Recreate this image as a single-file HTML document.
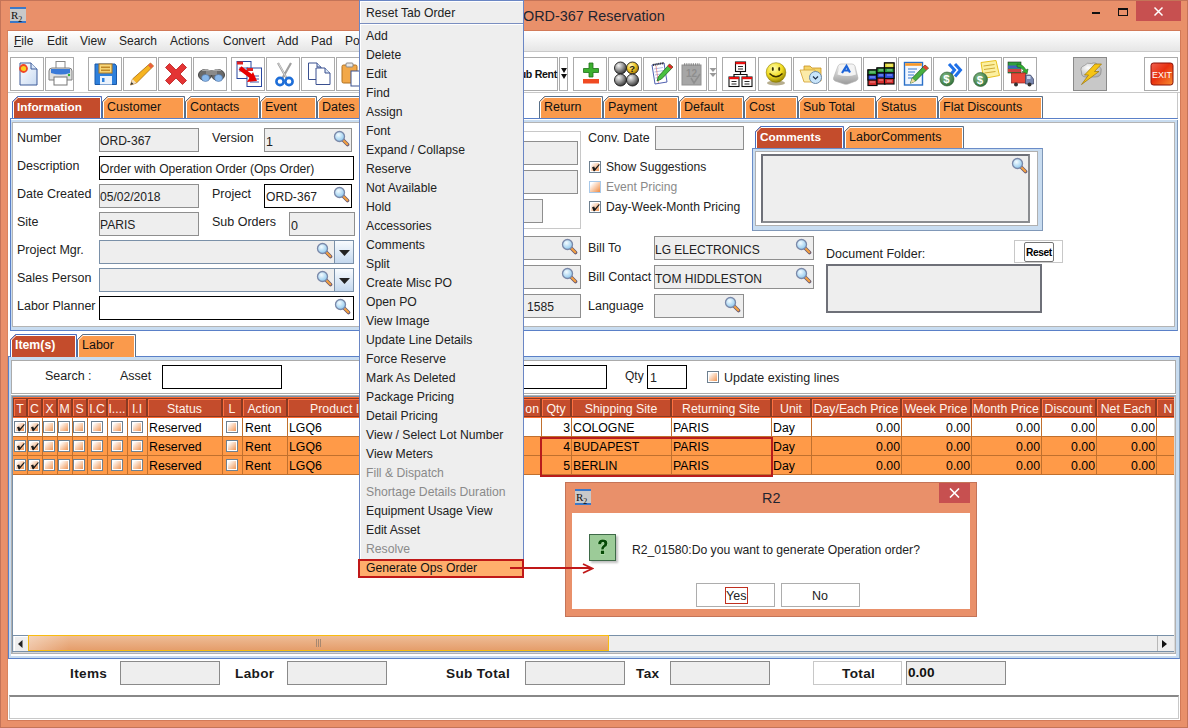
<!DOCTYPE html>
<html><head><meta charset="utf-8">
<style>
*{box-sizing:border-box;margin:0;padding:0}
html,body{width:1188px;height:728px;overflow:hidden}
body{position:relative;background:#E9906A;font-family:"Liberation Sans",sans-serif;font-size:12px;color:#222}
.a{position:absolute}
.t{position:absolute;white-space:nowrap;line-height:1}
.fld{position:absolute;background:#EEEEEE;border:1px solid #8E8E8E}
.fldw{position:absolute;background:#fff;border:1px solid #000}
.tab{position:absolute;top:96px;height:23px;background:#FA9A4E;border:1px solid #7A9CC8;border-bottom:none;font-size:13px;color:#111;padding:4px 0 0 5px;white-space:nowrap;line-height:1}
.tabsel{background:#C44C2A;color:#fff;font-weight:bold}
.lbl{position:absolute;white-space:nowrap;line-height:1;font-size:12.5px;color:#222}
.mi{position:absolute;left:366px;white-space:nowrap;line-height:1;font-size:12.2px;color:#222}
.dis{color:#8A8A8A}
.hd{position:absolute;top:398px;height:19px;background:#C24A2A;border-top:1px solid #FF7A46;border-left:1px solid #FF7A46;border-right:1px solid #8A3018;border-bottom:1px solid #8A3018;color:#fff;font-size:13px;text-align:center;line-height:17px;white-space:nowrap;overflow:hidden}
.cell{position:absolute;height:19px;border-right:1px solid #C87A40;border-bottom:1px solid #C87A40;font-size:13px;line-height:18px;white-space:nowrap;overflow:hidden;color:#000;padding:0 2px}
.cb{position:absolute;width:13px;height:13px;border:1px solid #6E8090;background:linear-gradient(135deg,#fff 15%,#F08A40 100%);box-shadow:inset 0 0 0 1px #fff}
.bold{font-weight:bold}
</style></head><body>

<div class="a" style="left:0;top:0;width:1188px;height:728px;border:1px solid #C47458"></div>
<div class="a" style="left:10px;top:7px;width:16px;height:16px;background:#C9C9C9;border-top:2px solid #3A78C8;border-bottom:2px solid #3A78C8"><div class="t" style="left:1px;top:1px;font-family:'Liberation Serif';font-size:11px;color:#111">R<sub style="font-size:8px">2</sub></div></div>
<div class="t" style="left:523px;top:8px;font-size:15px;color:#1F2430;transform:scaleX(0.96);transform-origin:0 0">ORD-367 Reservation</div>
<div class="a" style="left:1092px;top:12px;width:8px;height:2px;background:#111"></div>
<div class="a" style="left:1118px;top:8px;width:10px;height:8px;border:1px solid #111;border-top-width:2px"></div>
<div class="a" style="left:1136px;top:1px;width:45px;height:20px;background:#C75050"></div>
<svg class="a" style="left:1153px;top:6px" width="11" height="11" viewBox="0 0 11 11"><path d="M1.5 1.5l8 8M9.5 1.5l-8 8" stroke="#fff" stroke-width="1.5"/></svg>
<div class="a" style="left:7px;top:30px;width:1174px;height:691px;background:#fff;border-right:1px solid #D27A58;border-bottom:1px solid #D27A58;border-left:1px solid #D8845E;border-top:1px solid #D27A58"></div>
<div class="a" style="left:8px;top:31px;width:1172px;height:20px;background:linear-gradient(#fff,#E6E6E6)"></div>
<div class="a" style="left:8px;top:51px;width:1172px;height:1px;background:#C9C9C9"></div>
<div class="t" style="left:14px;top:35px"><u>F</u>ile</div>
<div class="t" style="left:47px;top:35px">Edit</div>
<div class="t" style="left:80px;top:35px">View</div>
<div class="t" style="left:119px;top:35px">Search</div>
<div class="t" style="left:170px;top:35px">Actions</div>
<div class="t" style="left:223px;top:35px">Convert</div>
<div class="t" style="left:277px;top:35px">Add</div>
<div class="t" style="left:311px;top:35px">Pad</div>
<div class="t" style="left:345px;top:35px">Po</div>
<svg width="0" height="0" style="position:absolute"><defs>
<radialGradient id="gball" cx="0.35" cy="0.3" r="0.75"><stop offset="0" stop-color="#F4F4F4"/><stop offset="0.45" stop-color="#A0A0A0"/><stop offset="1" stop-color="#303030"/></radialGradient>
<radialGradient id="yball" cx="0.35" cy="0.3" r="0.75"><stop offset="0" stop-color="#FFF8C0"/><stop offset="0.5" stop-color="#F0C828"/><stop offset="1" stop-color="#A07000"/></radialGradient>
<radialGradient id="smile" cx="0.4" cy="0.3" r="0.75"><stop offset="0" stop-color="#FFFDB0"/><stop offset="0.55" stop-color="#F2DC20"/><stop offset="1" stop-color="#8A7A00"/></radialGradient>
<linearGradient id="keyg" x1="0" y1="0" x2="0" y2="1"><stop offset="0" stop-color="#FAFAFA"/><stop offset="1" stop-color="#9A9A9A"/></linearGradient>
<linearGradient id="exitg" x1="0" y1="0" x2="1" y2="1"><stop offset="0" stop-color="#F06050"/><stop offset="0.45" stop-color="#E83010"/><stop offset="1" stop-color="#F89030"/></linearGradient>
<radialGradient id="cloud" cx="0.35" cy="0.35" r="0.8"><stop offset="0" stop-color="#FFFFFF"/><stop offset="1" stop-color="#A8A8A8"/></radialGradient>
<radialGradient id="dollar" cx="0.4" cy="0.35" r="0.7"><stop offset="0" stop-color="#8ABF8A"/><stop offset="1" stop-color="#2E6E36"/></radialGradient>
<linearGradient id="pgrad" x1="0" y1="0" x2="1" y2="1"><stop offset="0" stop-color="#FFFFFF"/><stop offset="1" stop-color="#C8DAF2"/></linearGradient>
</defs></svg>
<div class="a" style="left:10px;top:57px;width:34px;height:34px;border:1px solid #ABABAB;background:#fff"><svg class="a" style="left:3px;top:2px" width="30" height="30" viewBox="0 0 30 30"><path d="M6 3h11l6 6v16H6z" fill="url(#pgrad)" stroke="#3D5A98" stroke-width="1"/><path d="M17 3v6h6" fill="#D8E6F8" stroke="#3D5A98" stroke-width="1"/><circle cx="9.5" cy="8.5" r="3.5" fill="#F8D020" stroke="#F04828" stroke-width="1.8"/></svg></div>
<div class="a" style="left:45px;top:57px;width:29px;height:34px;border:1px solid #ABABAB;background:#fff"><svg class="a" style="left:0px;top:2px" width="30" height="30" viewBox="0 0 30 30"><rect x="10" y="1.5" width="9" height="8" fill="#fff" stroke="#888"/><path d="M3 11q0-3 3-3h17q3 0 3 3v9H3z" fill="#E0E0E0" stroke="#808080"/><path d="M5 9h19v4q-9 3-19 0z" fill="#3A7AD8"/><rect x="8" y="17" width="13" height="8" fill="#fff" stroke="#777"/><circle cx="23" cy="15" r="1.2" fill="#30B030"/></svg></div>
<div class="a" style="left:88px;top:57px;width:34px;height:34px;border:1px solid #ABABAB;background:#fff"><svg class="a" style="left:3px;top:2px" width="30" height="30" viewBox="0 0 30 30"><path d="M3 4h20l1.5 2v18.5H3z" fill="#2E80DC" stroke="#1A58A8"/><rect x="7" y="4" width="13" height="9" fill="#F8D87A" stroke="#B07820"/><rect x="9" y="6.5" width="9" height="1.6" fill="#C08828"/><rect x="9" y="9.5" width="9" height="1.6" fill="#C08828"/><rect x="8" y="16" width="12" height="8.5" fill="#EAF2FC"/><rect x="10" y="18" width="2.5" height="4" fill="#2E80DC"/></svg></div>
<div class="a" style="left:123px;top:57px;width:34px;height:34px;border:1px solid #ABABAB;background:#fff"><svg class="a" style="left:3px;top:2px" width="30" height="30" viewBox="0 0 30 30"><path d="M23.5 3l3 3-17 17-6 2 2-6z" fill="#F6B420" stroke="#A86A10" stroke-width="0.8"/><path d="M23.5 3l3 3-2.5 2.5-3-3z" fill="#E86040"/><path d="M3.5 25l2-6 4 4z" fill="#F2DEC0"/><path d="M3.5 25l1-3 2 2z" fill="#333"/></svg></div>
<div class="a" style="left:158px;top:57px;width:34px;height:34px;border:1px solid #ABABAB;background:#fff"><svg class="a" style="left:3px;top:2px" width="30" height="30" viewBox="0 0 30 30"><path d="M3.5 7.5l4-4 6.5 6.5 6.5-6.5 4 4-6.5 6.5 6.5 6.5-4 4-6.5-6.5-6.5 6.5-4-4 6.5-6.5z" fill="#E43434" stroke="#B81C1C" stroke-width="0.8"/></svg></div>
<div class="a" style="left:193px;top:57px;width:34px;height:34px;border:1px solid #ABABAB;background:#fff"><svg class="a" style="left:3px;top:2px" width="30" height="30" viewBox="0 0 30 30"><ellipse cx="8" cy="15" rx="6.5" ry="5.5" fill="#6A6A6A" stroke="#444"/><ellipse cx="21" cy="15" rx="6.5" ry="5.5" fill="#6A6A6A" stroke="#444"/><rect x="9" y="10" width="11" height="5" fill="#8A8A8A"/><path d="M4 11q5-4 10 0M15 11q5-4 10 0" fill="#A8A8A8"/><ellipse cx="8.5" cy="18" rx="4" ry="3.5" fill="#88B8EC" stroke="#5070A0" stroke-width="0.6"/><ellipse cx="21.5" cy="18" rx="4" ry="3.5" fill="#88B8EC" stroke="#5070A0" stroke-width="0.6"/></svg></div>
<div class="a" style="left:231px;top:57px;width:34px;height:34px;border:1px solid #ABABAB;background:#fff"><svg class="a" style="left:3px;top:2px" width="30" height="30" viewBox="0 0 30 30"><rect x="2" y="1.5" width="14" height="17" fill="#fff" stroke="#2A48A0"/><rect x="2" y="1.5" width="6" height="3" fill="#E02020"/><path d="M4 8h9M4 11h9" stroke="#2A48A0" stroke-width="0.8"/><rect x="12" y="8" width="14.5" height="18.5" fill="#fff" stroke="#2A48A0"/><rect x="12" y="8" width="6" height="3" fill="#E02020"/><path d="M15 16h9M15 19h9M15 22h9" stroke="#2A48A0" stroke-width="0.9"/><path d="M5 8l12 9" stroke="#E80000" stroke-width="4.5"/><path d="M12 22l10-1-4-9z" fill="#E80000"/></svg></div>
<div class="a" style="left:266px;top:57px;width:34px;height:34px;border:1px solid #ABABAB;background:#fff"><svg class="a" style="left:3px;top:2px" width="30" height="30" viewBox="0 0 30 30"><path d="M8 3l8.5 15M21 3l-8.5 15" stroke="#A0A0A0" stroke-width="2.2"/><path d="M8.5 3.5l7.5 13.5" stroke="#E8E8E8" stroke-width="0.8"/><circle cx="10" cy="21.5" r="3.6" fill="none" stroke="#1E6ED8" stroke-width="2.6"/><circle cx="19" cy="21.5" r="3.6" fill="none" stroke="#1E6ED8" stroke-width="2.6"/></svg></div>
<div class="a" style="left:301px;top:57px;width:34px;height:34px;border:1px solid #ABABAB;background:#fff"><svg class="a" style="left:3px;top:2px" width="30" height="30" viewBox="0 0 30 30"><path d="M3.5 3h8.5l4 4v12.5H3.5z" fill="#fff" stroke="#3A5090"/><path d="M12 3v4h4" fill="#D8E4F4" stroke="#3A5090"/><path d="M11 8h9l5 5v11.5H11z" fill="#fff" stroke="#3A5090"/><path d="M20 8v5h5" fill="#D8E4F4" stroke="#3A5090"/></svg></div>
<div class="a" style="left:336px;top:57px;width:34px;height:34px;border:1px solid #ABABAB;background:#fff"><svg class="a" style="left:3px;top:2px" width="30" height="30" viewBox="0 0 30 30"><rect x="2" y="5" width="15" height="18" rx="1.5" fill="#F2A848" stroke="#B07020"/><rect x="6" y="3" width="7" height="4" rx="1" fill="#E8E8E8" stroke="#888"/><rect x="11" y="11" width="14" height="15" fill="#fff" stroke="#3A5090"/></svg></div>
<div class="a" style="left:573px;top:57px;width:34px;height:34px;border:1px solid #ABABAB;background:#fff"><svg class="a" style="left:3px;top:2px" width="30" height="30" viewBox="0 0 30 30"><path d="M12 3h4v5.5h5.5v4H16V17h-4v-4.5H6.5v-4H12z" fill="#3CB030" stroke="#1E7018" stroke-width="0.8"/><rect x="6" y="19" width="16" height="4.5" fill="#F04A22"/></svg></div>
<div class="a" style="left:608px;top:57px;width:34px;height:34px;border:1px solid #ABABAB;background:#fff"><svg class="a" style="left:3px;top:2px" width="30" height="30" viewBox="0 0 30 30"><circle cx="8.5" cy="8" r="6" fill="url(#gball)" stroke="#1A1A1A" stroke-width="0.9"/><circle cx="20.5" cy="8" r="6" fill="url(#yball)" stroke="#1A1A1A" stroke-width="0.9"/><circle cx="8.5" cy="20" r="6" fill="url(#gball)" stroke="#1A1A1A" stroke-width="0.9"/><circle cx="20.5" cy="20" r="6" fill="url(#gball)" stroke="#1A1A1A" stroke-width="0.9"/><text x="17.3" y="12" font-size="9.5" font-weight="bold" fill="#1A1A1A" font-family="Liberation Sans">?</text></svg></div>
<div class="a" style="left:643px;top:57px;width:34px;height:34px;border:1px solid #ABABAB;background:#fff"><svg class="a" style="left:3px;top:2px" width="30" height="30" viewBox="0 0 30 30"><path d="M5 5l12-2 3 19-12 2z" fill="#fff" stroke="#5060B0"/><path d="M6 5l11-2" stroke="#333" stroke-width="2.2" stroke-dasharray="1 0.8"/><path d="M7 9l9-1.5M7.5 12l9-1.5M8 15l9-1.5M8.5 18l9-1.5" stroke="#90A0E0" stroke-width="0.7"/><path d="M9 6l2.5 17" stroke="#E06060" stroke-width="0.6"/><path d="M22.5 4l3.5 3-11.5 12-4.5 2 1.5-4.5z" fill="#48C040" stroke="#1E6A1E" stroke-width="0.8"/><path d="M22.5 4l3.5 3-2 2-3.5-3z" fill="#E02828"/></svg></div>
<div class="a" style="left:678px;top:57px;width:29px;height:34px;border:1px solid #ABABAB;background:#fff"><svg class="a" style="left:0px;top:2px" width="30" height="30" viewBox="0 0 30 30"><rect x="3" y="5" width="19" height="20" fill="#A6A6A6" stroke="#909090"/><path d="M5 4.5h16" stroke="#8A8A8A" stroke-width="2.5" stroke-dasharray="1.2 1"/><text x="7" y="17" font-size="10" font-weight="bold" fill="#8E8E8E" font-family="Liberation Sans">12</text><path d="M12 18l3 5 6-9" fill="none" stroke="#8E8E8E" stroke-width="1.5"/></svg></div>
<div class="a" style="left:722px;top:57px;width:34px;height:34px;border:1px solid #ABABAB;background:#fff"><svg class="a" style="left:3px;top:2px" width="30" height="30" viewBox="0 0 30 30"><path d="M14.5 11v3.5M8 17v-2.5h13V17" fill="none" stroke="#111" stroke-width="1.2"/><rect x="9.5" y="2" width="10" height="9.5" fill="#fff" stroke="#111" stroke-width="1.1"/><rect x="9.5" y="2" width="10" height="2.2" fill="#E81010"/><rect x="3" y="17" width="10" height="9.5" fill="#fff" stroke="#111" stroke-width="1.1"/><rect x="3" y="17" width="10" height="2.2" fill="#E81010"/><rect x="16" y="17" width="10" height="9.5" fill="#fff" stroke="#111" stroke-width="1.1"/><rect x="16" y="17" width="10" height="2.2" fill="#E81010"/><path d="M12 6.5h5M12 9h5M5.5 21.5h5M5.5 24h5M18.5 21.5h5M18.5 24h5" stroke="#111" stroke-width="0.9"/></svg></div>
<div class="a" style="left:758px;top:57px;width:34px;height:34px;border:1px solid #ABABAB;background:#fff"><svg class="a" style="left:3px;top:2px" width="30" height="30" viewBox="0 0 30 30"><ellipse cx="14" cy="23" rx="9" ry="2.5" fill="#7A6A30" opacity="0.55"/><circle cx="14" cy="12.5" r="9.8" fill="url(#smile)" stroke="#8A7A00" stroke-width="0.6"/><ellipse cx="10.8" cy="9" rx="1" ry="2" fill="#3A3000"/><ellipse cx="17.2" cy="9" rx="1" ry="2" fill="#3A3000"/><path d="M7.5 13.5q6.5 6.5 13 0" fill="none" stroke="#3A3000" stroke-width="1.5"/></svg></div>
<div class="a" style="left:793px;top:57px;width:34px;height:34px;border:1px solid #ABABAB;background:#fff"><svg class="a" style="left:3px;top:2px" width="30" height="30" viewBox="0 0 30 30"><path d="M7 6h6l2 2h9v13H7z" fill="#F4D468" stroke="#C89020" stroke-width="0.8"/><path d="M3 10h15l3 12H7z" fill="#FCEBA8" stroke="#D0A030" stroke-width="0.8"/><circle cx="18.5" cy="17.5" r="6" fill="#C8E4FA" stroke="#6A88A8" stroke-width="1"/><path d="M16 16.5l2.5 2.5 2.5-2.5" fill="none" stroke="#1A2A44" stroke-width="1.1"/></svg></div>
<div class="a" style="left:828px;top:57px;width:34px;height:34px;border:1px solid #ABABAB;background:#fff"><svg class="a" style="left:3px;top:2px" width="30" height="30" viewBox="0 0 30 30"><path d="M6 6q1-2 3-2h11q2 0 3 2l3 12q0 2-2 3l-8 3q-2 0.6-4 0l-9-3q-2-1-1.5-3z" fill="url(#keyg)" stroke="#B0B0B0" stroke-width="0.6"/><path d="M7.5 6.5q0.8-1.5 2.5-1.5h9.5q1.8 0 2.5 1.5l2 8q-9 3-18.5 0z" fill="#F4F4F4"/><path d="M10 13l4.5-7 3.5 6.5M11.5 10.5h5" fill="none" stroke="#1E64D8" stroke-width="2.2"/></svg></div>
<div class="a" style="left:863px;top:57px;width:34px;height:34px;border:1px solid #ABABAB;background:#fff"><svg class="a" style="left:3px;top:2px" width="30" height="30" viewBox="0 0 30 30"><g stroke="#080808" stroke-width="1.2"><rect x="1" y="10" width="9" height="15.5" fill="#D83030"/><rect x="1" y="10" width="9" height="5" fill="#30A040"/><rect x="1" y="15" width="9" height="5" fill="#3050E0"/><rect x="10" y="8" width="8" height="16" fill="#D83030"/><rect x="10" y="8" width="8" height="5" fill="#30A040"/><rect x="10" y="13" width="8" height="5" fill="#3050E0"/><rect x="17.5" y="3" width="9.5" height="21" fill="#D83030"/><rect x="17.5" y="3" width="9.5" height="5" fill="#E8E040"/><rect x="17.5" y="8" width="9.5" height="5" fill="#30A040"/><rect x="17.5" y="13" width="9.5" height="5.5" fill="#3050E0"/></g><path d="M3 12h5M3 17h5M3 22h5M12 10h4M12 15h4M12 20h4M20 5h5M20 10h5M20 15h5M20 21h5" stroke="#fff" stroke-width="0.8" opacity="0.6"/></svg></div>
<div class="a" style="left:898px;top:57px;width:34px;height:34px;border:1px solid #ABABAB;background:#fff"><svg class="a" style="left:3px;top:2px" width="30" height="30" viewBox="0 0 30 30"><rect x="2.5" y="2.5" width="18" height="22.5" fill="#F2F7FE" stroke="#2A70C8" stroke-width="1.4"/><rect x="3.2" y="3.2" width="16.6" height="2.6" fill="#F89828"/><path d="M6 9h9M6 12h7M6 15h6M6 18h5" stroke="#3A7AD0" stroke-width="1"/><path d="M23 5l3.5 3-13 13-5 2.2 1.7-5z" fill="#48B040" stroke="#1E601E" stroke-width="0.8"/><path d="M23 5l3.5 3-2.3 2.3-3.5-3z" fill="#E04030"/><path d="M8.5 23.2l1.7-5 3.3 3z" fill="#F0D8A0"/></svg></div>
<div class="a" style="left:933px;top:57px;width:34px;height:34px;border:1px solid #ABABAB;background:#fff"><svg class="a" style="left:3px;top:2px" width="30" height="30" viewBox="0 0 30 30"><path d="M12 4l5.5 6-5.5 6.5M18 4l5.5 6-5.5 6.5" fill="none" stroke="#1E70E8" stroke-width="3"/><circle cx="10" cy="19" r="7" fill="url(#dollar)" stroke="#2A5A30" stroke-width="0.6"/><text x="6.3" y="23.3" font-size="11.5" font-weight="bold" fill="#fff" font-family="Liberation Sans">$</text></svg></div>
<div class="a" style="left:968px;top:57px;width:34px;height:34px;border:1px solid #ABABAB;background:#fff"><svg class="a" style="left:3px;top:2px" width="30" height="30" viewBox="0 0 30 30"><path d="M9 2.5l15-2 3.5 15-16 3z" fill="#FCF0A0" stroke="#E8C020" stroke-width="1"/><path d="M11.5 6l11-1.5M12 9.5l11-1.5M12.5 13l11-1.5" stroke="#C8A028" stroke-width="0.9"/><circle cx="8.5" cy="19.5" r="7" fill="url(#dollar)" stroke="#2A5A30" stroke-width="0.6"/><text x="4.8" y="23.8" font-size="11.5" font-weight="bold" fill="#fff" font-family="Liberation Sans">$</text></svg></div>
<div class="a" style="left:1003px;top:57px;width:34px;height:34px;border:1px solid #ABABAB;background:#fff"><svg class="a" style="left:3px;top:2px" width="30" height="30" viewBox="0 0 30 30"><rect x="1" y="2" width="13" height="11" fill="#30A040" stroke="#203020" stroke-width="0.6"/><rect x="1" y="5.5" width="13" height="3" fill="#4060C0"/><rect x="1" y="9" width="13" height="3" fill="#D04040"/><path d="M10 4q6 0 9 6l2-1-1 5-5-2 2-1q-2-4-7-4z" fill="#30B030" stroke="#1A601A" stroke-width="0.6"/><rect x="4.5" y="13" width="14" height="10" fill="#E84838" stroke="#902020" stroke-width="0.7"/><path d="M18.5 15h5l3 4v5h-8z" fill="#7A88B0" stroke="#3A4060" stroke-width="0.7"/><rect x="20" y="16" width="3.5" height="3" fill="#C8D8F0"/><circle cx="9" cy="24.5" r="2" fill="#333"/><circle cx="22.5" cy="24.5" r="2" fill="#333"/></svg></div>
<div class="a" style="left:1073px;top:57px;width:34px;height:34px;border:1px solid #8A8A8A;background:#C8C8C8"><svg class="a" style="left:3px;top:2px" width="30" height="30" viewBox="0 0 30 30"><path d="M4.5 12q-2-5 3-6.5q2.5-3.5 7-2q4.5-2 7 2.5q4 2 2.5 6q0 5-6 5H9q-5 0-4.5-5z" fill="url(#cloud)" stroke="#8A8A8A" stroke-width="0.7"/><path d="M18 4H24.5L17.5 11.5H22L4.5 24.5L11.5 15H7.5z" fill="#F6C414" stroke="#9A7408" stroke-width="0.7"/></svg></div>
<div class="a" style="left:1144px;top:57px;width:34px;height:34px;border:1px solid #ABABAB;background:#fff"><svg class="a" style="left:3px;top:2px" width="30" height="30" viewBox="0 0 30 30"><rect x="3" y="3" width="22" height="22" rx="2.5" fill="url(#exitg)" stroke="#8A1008" stroke-width="1"/><text x="4" y="18.2" font-size="9.6" fill="#fff" font-family="Liberation Sans" textLength="20" lengthAdjust="spacingAndGlyphs">EXIT</text></svg></div>
<div class="a" style="left:524px;top:57px;width:34px;height:34px;border:1px solid #ABABAB;border-left:none;background:#fff"></div>
<div class="t bold" style="right:631px;top:69px;font-size:10.6px;letter-spacing:-0.3px;color:#111">Sub Rent</div>
<div class="a" style="left:559px;top:57px;width:9px;height:34px;border:1px solid #ABABAB;background:#fff"></div>
<svg class="a" style="left:561px;top:68px" width="6" height="11" viewBox="0 0 6 11"><path d="M0 0h6l-3 5zM0 6h6l-3 5z" fill="#111"/></svg>
<div class="a" style="left:708px;top:57px;width:9px;height:34px;border:1px solid #ABABAB;background:#fff"></div>
<svg class="a" style="left:709px;top:67px" width="8" height="12" viewBox="0 0 8 12"><path d="M0.5 1h7l-3.5 4zM0.5 6h7l-3.5 4z" fill="#999"/></svg>
<div class="a" style="left:8px;top:92px;width:1172px;height:1px;background:#C8C8C8"></div>
<div class="a" style="left:10px;top:92px;width:1168px;height:27px;border-right:1px solid #C8C8C8"></div>
<svg class="a" style="left:12px;top:96px" width="90" height="23" viewBox="0 0 90 23"><path d="M0.5 23 V5.5 L5.5 0.5 H89.5 V23" fill="#C44C2C" stroke="#4A70C0" stroke-width="1"/><path d="M1.5 23 V6 L6 1.5 H88.5 V23" fill="none" stroke="#fff" stroke-width="1"/><text x="5" y="15" font-family="Liberation Sans" font-size="11.8" font-weight="bold" fill="#fff">Information</text></svg>
<svg class="a" style="left:102px;top:96px" width="83" height="23" viewBox="0 0 83 23"><path d="M0.5 23 V5.5 L5.5 0.5 H82.5 V23" fill="#FA9A4C" stroke="#58708A" stroke-width="1"/><path d="M1.5 23 V6 L6 1.5 H81.5 V23" fill="none" stroke="#fff" stroke-width="1"/><text x="5" y="15" font-family="Liberation Sans" font-size="12.5" font-weight="normal" fill="#111">Customer</text></svg>
<svg class="a" style="left:185px;top:96px" width="75" height="23" viewBox="0 0 75 23"><path d="M0.5 23 V5.5 L5.5 0.5 H74.5 V23" fill="#FA9A4C" stroke="#58708A" stroke-width="1"/><path d="M1.5 23 V6 L6 1.5 H73.5 V23" fill="none" stroke="#fff" stroke-width="1"/><text x="5" y="15" font-family="Liberation Sans" font-size="12.5" font-weight="normal" fill="#111">Contacts</text></svg>
<svg class="a" style="left:260px;top:96px" width="57" height="23" viewBox="0 0 57 23"><path d="M0.5 23 V5.5 L5.5 0.5 H56.5 V23" fill="#FA9A4C" stroke="#58708A" stroke-width="1"/><path d="M1.5 23 V6 L6 1.5 H55.5 V23" fill="none" stroke="#fff" stroke-width="1"/><text x="5" y="15" font-family="Liberation Sans" font-size="12.5" font-weight="normal" fill="#111">Event</text></svg>
<svg class="a" style="left:317px;top:96px" width="84" height="23" viewBox="0 0 84 23"><path d="M0.5 23 V5.5 L5.5 0.5 H83.5 V23" fill="#FA9A4C" stroke="#58708A" stroke-width="1"/><path d="M1.5 23 V6 L6 1.5 H82.5 V23" fill="none" stroke="#fff" stroke-width="1"/><text x="5" y="15" font-family="Liberation Sans" font-size="12.5" font-weight="normal" fill="#111">Dates</text></svg>
<svg class="a" style="left:539px;top:96px" width="64" height="23" viewBox="0 0 64 23"><path d="M0.5 23 V5.5 L5.5 0.5 H63.5 V23" fill="#FA9A4C" stroke="#58708A" stroke-width="1"/><path d="M1.5 23 V6 L6 1.5 H62.5 V23" fill="none" stroke="#fff" stroke-width="1"/><text x="5" y="15" font-family="Liberation Sans" font-size="12.5" font-weight="normal" fill="#111">Return</text></svg>
<svg class="a" style="left:603px;top:96px" width="76" height="23" viewBox="0 0 76 23"><path d="M0.5 23 V5.5 L5.5 0.5 H75.5 V23" fill="#FA9A4C" stroke="#58708A" stroke-width="1"/><path d="M1.5 23 V6 L6 1.5 H74.5 V23" fill="none" stroke="#fff" stroke-width="1"/><text x="5" y="15" font-family="Liberation Sans" font-size="12.5" font-weight="normal" fill="#111">Payment</text></svg>
<svg class="a" style="left:679px;top:96px" width="65" height="23" viewBox="0 0 65 23"><path d="M0.5 23 V5.5 L5.5 0.5 H64.5 V23" fill="#FA9A4C" stroke="#58708A" stroke-width="1"/><path d="M1.5 23 V6 L6 1.5 H63.5 V23" fill="none" stroke="#fff" stroke-width="1"/><text x="5" y="15" font-family="Liberation Sans" font-size="12.5" font-weight="normal" fill="#111">Default</text></svg>
<svg class="a" style="left:744px;top:96px" width="54" height="23" viewBox="0 0 54 23"><path d="M0.5 23 V5.5 L5.5 0.5 H53.5 V23" fill="#FA9A4C" stroke="#58708A" stroke-width="1"/><path d="M1.5 23 V6 L6 1.5 H52.5 V23" fill="none" stroke="#fff" stroke-width="1"/><text x="5" y="15" font-family="Liberation Sans" font-size="12.5" font-weight="normal" fill="#111">Cost</text></svg>
<svg class="a" style="left:798px;top:96px" width="78" height="23" viewBox="0 0 78 23"><path d="M0.5 23 V5.5 L5.5 0.5 H77.5 V23" fill="#FA9A4C" stroke="#58708A" stroke-width="1"/><path d="M1.5 23 V6 L6 1.5 H76.5 V23" fill="none" stroke="#fff" stroke-width="1"/><text x="5" y="15" font-family="Liberation Sans" font-size="12.5" font-weight="normal" fill="#111">Sub Total</text></svg>
<svg class="a" style="left:876px;top:96px" width="62" height="23" viewBox="0 0 62 23"><path d="M0.5 23 V5.5 L5.5 0.5 H61.5 V23" fill="#FA9A4C" stroke="#58708A" stroke-width="1"/><path d="M1.5 23 V6 L6 1.5 H60.5 V23" fill="none" stroke="#fff" stroke-width="1"/><text x="5" y="15" font-family="Liberation Sans" font-size="12.5" font-weight="normal" fill="#111">Status</text></svg>
<svg class="a" style="left:938px;top:96px" width="105" height="23" viewBox="0 0 105 23"><path d="M0.5 23 V5.5 L5.5 0.5 H104.5 V23" fill="#FA9A4C" stroke="#58708A" stroke-width="1"/><path d="M1.5 23 V6 L6 1.5 H103.5 V23" fill="none" stroke="#fff" stroke-width="1"/><text x="5" y="15" font-family="Liberation Sans" font-size="12.5" font-weight="normal" fill="#111">Flat Discounts</text></svg>
<div class="a" style="left:10px;top:118px;width:1168px;height:213px;background:#C8DCF0;border:1px solid #5A80C8;border-right-color:#8098B8"></div>
<div class="a" style="left:11px;top:119px;width:1167px;height:1px;background:#fff"></div>
<div class="a" style="left:12px;top:122px;width:1163px;height:205px;border:1px solid #B4B4B4;background:#fff"></div>
<div class="lbl" style="left:17px;top:132px">Number</div>
<div class="lbl" style="left:17px;top:160px">Description</div>
<div class="lbl" style="left:17px;top:188px">Date Created</div>
<div class="lbl" style="left:17px;top:216px">Site</div>
<div class="lbl" style="left:17px;top:244px">Project Mgr.</div>
<div class="lbl" style="left:17px;top:272px">Sales Person</div>
<div class="lbl" style="left:17px;top:300px">Labor Planner</div>
<div class="fld" style="left:99px;top:128px;width:100px;height:24px"><div class="t" style="left:0;top:6px;font-size:12.1px">ORD-367</div></div>
<div class="lbl" style="left:212px;top:132px">Version</div>
<div class="fld" style="left:264px;top:128px;width:88px;height:24px"><div class="t" style="left:1px;top:7px;font-size:12.5px">1</div></div>
<div class="fldw" style="left:99px;top:156px;width:255px;height:24px"><div class="t" style="left:0;top:6px;font-size:12.1px">Order with Operation Order (Ops Order)</div></div>
<div class="fld" style="left:99px;top:184px;width:100px;height:24px"><div class="t" style="left:0;top:6px;font-size:12.1px">05/02/2018</div></div>
<div class="lbl" style="left:212px;top:188px">Project</div>
<div class="fldw" style="left:264px;top:184px;width:88px;height:24px"><div class="t" style="left:1px;top:6px;font-size:12.1px">ORD-367</div></div>
<div class="fld" style="left:99px;top:212px;width:100px;height:24px"><div class="t" style="left:0;top:6px;font-size:12.1px">PARIS</div></div>
<div class="lbl" style="left:212px;top:216px">Sub Orders</div>
<div class="fld" style="left:289px;top:212px;width:66px;height:24px"><div class="t" style="left:1px;top:7px;font-size:12.5px">0</div></div>
<div class="a" style="left:99px;top:240px;width:255px;height:24px;background:#EEEEEE;border:1px solid #7A90A8"></div><div class="a" style="left:334px;top:240px;width:20px;height:24px;background:linear-gradient(#F8FBFE,#C4D8EE);border:1px solid #7A90A8"></div><svg class="a" style="left:339px;top:250px" width="11" height="6" viewBox="0 0 11 6"><path d="M0 0h11L5.5 6z" fill="#222"/></svg>
<svg class="a" style="left:316px;top:242px" width="17" height="17" viewBox="0 0 17 17"><defs><radialGradient id="lg" cx="0.4" cy="0.35" r="0.7"><stop offset="0" stop-color="#F4FCFF"/><stop offset="1" stop-color="#88C4EC"/></radialGradient></defs><path d="M9.5 9.5l5 5" stroke="#6A5A70" stroke-width="3.6" stroke-linecap="round"/><path d="M9.8 9.8l4.5 4.5" stroke="#F4A040" stroke-width="2" stroke-linecap="round"/><circle cx="6.5" cy="6.5" r="5" fill="url(#lg)" stroke="#7A88A8" stroke-width="1.3"/></svg>
<div class="a" style="left:99px;top:268px;width:255px;height:24px;background:#EEEEEE;border:1px solid #7A90A8"></div><div class="a" style="left:334px;top:268px;width:20px;height:24px;background:linear-gradient(#F8FBFE,#C4D8EE);border:1px solid #7A90A8"></div><svg class="a" style="left:339px;top:278px" width="11" height="6" viewBox="0 0 11 6"><path d="M0 0h11L5.5 6z" fill="#222"/></svg>
<svg class="a" style="left:316px;top:270px" width="17" height="17" viewBox="0 0 17 17"><defs><radialGradient id="lg" cx="0.4" cy="0.35" r="0.7"><stop offset="0" stop-color="#F4FCFF"/><stop offset="1" stop-color="#88C4EC"/></radialGradient></defs><path d="M9.5 9.5l5 5" stroke="#6A5A70" stroke-width="3.6" stroke-linecap="round"/><path d="M9.8 9.8l4.5 4.5" stroke="#F4A040" stroke-width="2" stroke-linecap="round"/><circle cx="6.5" cy="6.5" r="5" fill="url(#lg)" stroke="#7A88A8" stroke-width="1.3"/></svg>
<div class="fldw" style="left:99px;top:296px;width:255px;height:24px"></div>
<svg class="a" style="left:334px;top:298px" width="17" height="17" viewBox="0 0 17 17"><defs><radialGradient id="lg" cx="0.4" cy="0.35" r="0.7"><stop offset="0" stop-color="#F4FCFF"/><stop offset="1" stop-color="#88C4EC"/></radialGradient></defs><path d="M9.5 9.5l5 5" stroke="#6A5A70" stroke-width="3.6" stroke-linecap="round"/><path d="M9.8 9.8l4.5 4.5" stroke="#F4A040" stroke-width="2" stroke-linecap="round"/><circle cx="6.5" cy="6.5" r="5" fill="url(#lg)" stroke="#7A88A8" stroke-width="1.3"/></svg>
<svg class="a" style="left:333px;top:130px" width="17" height="17" viewBox="0 0 17 17"><defs><radialGradient id="lg" cx="0.4" cy="0.35" r="0.7"><stop offset="0" stop-color="#F4FCFF"/><stop offset="1" stop-color="#88C4EC"/></radialGradient></defs><path d="M9.5 9.5l5 5" stroke="#6A5A70" stroke-width="3.6" stroke-linecap="round"/><path d="M9.8 9.8l4.5 4.5" stroke="#F4A040" stroke-width="2" stroke-linecap="round"/><circle cx="6.5" cy="6.5" r="5" fill="url(#lg)" stroke="#7A88A8" stroke-width="1.3"/></svg>
<svg class="a" style="left:333px;top:186px" width="17" height="17" viewBox="0 0 17 17"><defs><radialGradient id="lg" cx="0.4" cy="0.35" r="0.7"><stop offset="0" stop-color="#F4FCFF"/><stop offset="1" stop-color="#88C4EC"/></radialGradient></defs><path d="M9.5 9.5l5 5" stroke="#6A5A70" stroke-width="3.6" stroke-linecap="round"/><path d="M9.8 9.8l4.5 4.5" stroke="#F4A040" stroke-width="2" stroke-linecap="round"/><circle cx="6.5" cy="6.5" r="5" fill="url(#lg)" stroke="#7A88A8" stroke-width="1.3"/></svg>
<div class="a" style="left:500px;top:131px;width:81px;height:98px;border:1px solid #C8C8C8"></div>
<div class="fld" style="left:500px;top:141px;width:78px;height:24px"></div>
<div class="fld" style="left:500px;top:170px;width:78px;height:24px"></div>
<div class="fld" style="left:500px;top:199px;width:43px;height:24px"></div>
<div class="fld" style="left:500px;top:236px;width:81px;height:24px"></div>
<div class="fld" style="left:500px;top:265px;width:81px;height:24px"></div>
<div class="fld" style="left:500px;top:294px;width:81px;height:24px"><div class="t" style="left:26px;top:6px;font-size:12.1px">1585</div></div>
<div class="lbl" style="left:588px;top:132px">Conv. Date</div>
<div class="fld" style="left:655px;top:126px;width:89px;height:24px"></div>
<div class="cb" style="left:589px;top:161px;width:12px;height:12px"><svg class="a" style="left:0px;top:0px" width="11" height="11" viewBox="0 0 11 11"><path d="M2 5.2L4.2 4.6L5 6.6L9 2L9.8 2.8L4.6 9.2L3.6 9.2z" fill="#1A1A1A"/></svg></div>
<div class="lbl" style="left:606px;top:161px;font-size:12.1px">Show Suggestions</div>
<div class="cb" style="left:589px;top:181px;width:12px;height:12px;border-color:#A8C8E8;box-shadow:none"></div>
<div class="lbl dis" style="left:606px;top:181px;font-size:12.1px">Event Pricing</div>
<div class="cb" style="left:589px;top:201px;width:12px;height:12px"><svg class="a" style="left:0px;top:0px" width="11" height="11" viewBox="0 0 11 11"><path d="M2 5.2L4.2 4.6L5 6.6L9 2L9.8 2.8L4.6 9.2L3.6 9.2z" fill="#1A1A1A"/></svg></div>
<div class="lbl" style="left:606px;top:201px;font-size:12.1px">Day-Week-Month Pricing</div>
<div class="lbl" style="left:588px;top:242px">Bill To</div>
<div class="fld" style="left:654px;top:236px;width:160px;height:24px"><div class="t" style="left:0px;top:7px;font-size:12.0px">LG ELECTRONICS</div></div>
<div class="lbl" style="left:588px;top:271px">Bill Contact</div>
<div class="fld" style="left:654px;top:265px;width:160px;height:24px"><div class="t" style="left:0px;top:7px;font-size:12.0px">TOM HIDDLESTON</div></div>
<div class="lbl" style="left:588px;top:300px">Language</div>
<div class="fld" style="left:654px;top:294px;width:90px;height:24px"></div>
<svg class="a" style="left:561px;top:238px" width="17" height="17" viewBox="0 0 17 17"><defs><radialGradient id="lg" cx="0.4" cy="0.35" r="0.7"><stop offset="0" stop-color="#F4FCFF"/><stop offset="1" stop-color="#88C4EC"/></radialGradient></defs><path d="M9.5 9.5l5 5" stroke="#6A5A70" stroke-width="3.6" stroke-linecap="round"/><path d="M9.8 9.8l4.5 4.5" stroke="#F4A040" stroke-width="2" stroke-linecap="round"/><circle cx="6.5" cy="6.5" r="5" fill="url(#lg)" stroke="#7A88A8" stroke-width="1.3"/></svg>
<svg class="a" style="left:561px;top:267px" width="17" height="17" viewBox="0 0 17 17"><defs><radialGradient id="lg" cx="0.4" cy="0.35" r="0.7"><stop offset="0" stop-color="#F4FCFF"/><stop offset="1" stop-color="#88C4EC"/></radialGradient></defs><path d="M9.5 9.5l5 5" stroke="#6A5A70" stroke-width="3.6" stroke-linecap="round"/><path d="M9.8 9.8l4.5 4.5" stroke="#F4A040" stroke-width="2" stroke-linecap="round"/><circle cx="6.5" cy="6.5" r="5" fill="url(#lg)" stroke="#7A88A8" stroke-width="1.3"/></svg>
<svg class="a" style="left:795px;top:238px" width="17" height="17" viewBox="0 0 17 17"><defs><radialGradient id="lg" cx="0.4" cy="0.35" r="0.7"><stop offset="0" stop-color="#F4FCFF"/><stop offset="1" stop-color="#88C4EC"/></radialGradient></defs><path d="M9.5 9.5l5 5" stroke="#6A5A70" stroke-width="3.6" stroke-linecap="round"/><path d="M9.8 9.8l4.5 4.5" stroke="#F4A040" stroke-width="2" stroke-linecap="round"/><circle cx="6.5" cy="6.5" r="5" fill="url(#lg)" stroke="#7A88A8" stroke-width="1.3"/></svg>
<svg class="a" style="left:795px;top:267px" width="17" height="17" viewBox="0 0 17 17"><defs><radialGradient id="lg" cx="0.4" cy="0.35" r="0.7"><stop offset="0" stop-color="#F4FCFF"/><stop offset="1" stop-color="#88C4EC"/></radialGradient></defs><path d="M9.5 9.5l5 5" stroke="#6A5A70" stroke-width="3.6" stroke-linecap="round"/><path d="M9.8 9.8l4.5 4.5" stroke="#F4A040" stroke-width="2" stroke-linecap="round"/><circle cx="6.5" cy="6.5" r="5" fill="url(#lg)" stroke="#7A88A8" stroke-width="1.3"/></svg>
<svg class="a" style="left:724px;top:296px" width="17" height="17" viewBox="0 0 17 17"><defs><radialGradient id="lg" cx="0.4" cy="0.35" r="0.7"><stop offset="0" stop-color="#F4FCFF"/><stop offset="1" stop-color="#88C4EC"/></radialGradient></defs><path d="M9.5 9.5l5 5" stroke="#6A5A70" stroke-width="3.6" stroke-linecap="round"/><path d="M9.8 9.8l4.5 4.5" stroke="#F4A040" stroke-width="2" stroke-linecap="round"/><circle cx="6.5" cy="6.5" r="5" fill="url(#lg)" stroke="#7A88A8" stroke-width="1.3"/></svg>
<svg class="a" style="left:755px;top:126px" width="89" height="22" viewBox="0 0 89 22"><path d="M0.5 22 V5.5 L5.5 0.5 H88.5 V22" fill="#C44C2C" stroke="#4A70C0" stroke-width="1"/><path d="M1.5 22 V6 L6 1.5 H87.5 V22" fill="none" stroke="#fff" stroke-width="1"/><text x="5" y="15" font-family="Liberation Sans" font-size="11.8" font-weight="bold" fill="#fff">Comments</text></svg>
<svg class="a" style="left:844px;top:126px" width="120" height="22" viewBox="0 0 120 22"><path d="M0.5 22 V5.5 L5.5 0.5 H119.5 V22" fill="#FA9A4C" stroke="#58708A" stroke-width="1"/><path d="M1.5 22 V6 L6 1.5 H118.5 V22" fill="none" stroke="#fff" stroke-width="1"/><text x="5" y="15" font-family="Liberation Sans" font-size="12.5" font-weight="normal" fill="#111">LaborComments</text></svg>
<div class="a" style="left:752px;top:148px;width:291px;height:83px;background:#C8DCF0;border:1px solid #6A8CC8;border-right-color:#8098B8;border-bottom-color:#8098B8"></div>
<div class="a" style="left:755px;top:151px;width:283px;height:75px;border:1px solid #B0B0B0;background:#fff"></div>
<div class="a" style="left:761px;top:154px;width:269px;height:69px;background:#EEEEEE;border:2px solid #6E7078;border-right-color:#8A8C90;border-bottom-color:#8A8C90"></div>
<svg class="a" style="left:1011px;top:157px" width="17" height="17" viewBox="0 0 17 17"><defs><radialGradient id="lg" cx="0.4" cy="0.35" r="0.7"><stop offset="0" stop-color="#F4FCFF"/><stop offset="1" stop-color="#88C4EC"/></radialGradient></defs><path d="M9.5 9.5l5 5" stroke="#6A5A70" stroke-width="3.6" stroke-linecap="round"/><path d="M9.8 9.8l4.5 4.5" stroke="#F4A040" stroke-width="2" stroke-linecap="round"/><circle cx="6.5" cy="6.5" r="5" fill="url(#lg)" stroke="#7A88A8" stroke-width="1.3"/></svg>
<div class="lbl" style="left:826px;top:248px;font-size:12.5px">Document Folder:</div>
<div class="a" style="left:826px;top:264px;width:216px;height:49px;background:#EEEEEE;border:2px solid #6E7078"></div>
<div class="a" style="left:1014px;top:240px;width:49px;height:23px;border:1px solid #C8C8C8"></div>
<div class="a" style="left:1024px;top:242px;width:30px;height:20px;border:1px solid #777;border-radius:2px;background:#fff"><div class="t bold" style="left:1px;top:5px;font-size:10.2px;letter-spacing:-0.4px;color:#000">Reset</div></div>
<div class="a" style="left:8px;top:356px;width:1172px;height:303px;background:#C8DCF0;border:1px solid #5A80C8;border-right-color:#8AA0B8"></div>
<div class="a" style="left:11px;top:360px;width:1165px;height:296px;background:#fff"></div>
<div class="a" style="left:11px;top:360px;width:1165px;height:34px;border:1px solid #ABABAB"></div>
<svg class="a" style="left:10px;top:334px" width="67" height="23" viewBox="0 0 67 23"><path d="M0.5 23 V5.5 L5.5 0.5 H66.5 V23" fill="#C44C2C" stroke="#4A70C0" stroke-width="1"/><path d="M1.5 23 V6 L6 1.5 H65.5 V23" fill="none" stroke="#fff" stroke-width="1"/><text x="5" y="15" font-family="Liberation Sans" font-size="12.3" font-weight="bold" fill="#fff">Item(s)</text></svg>
<svg class="a" style="left:77px;top:334px" width="59" height="23" viewBox="0 0 59 23"><path d="M0.5 23 V5.5 L5.5 0.5 H58.5 V23" fill="#FA9A4C" stroke="#58708A" stroke-width="1"/><path d="M1.5 23 V6 L6 1.5 H57.5 V23" fill="none" stroke="#fff" stroke-width="1"/><text x="5" y="15" font-family="Liberation Sans" font-size="12.5" font-weight="normal" fill="#111">Labor</text></svg>
<div class="lbl" style="left:45px;top:370px">Search :</div>
<div class="lbl" style="left:120px;top:370px">Asset</div>
<div class="fldw" style="left:162px;top:365px;width:120px;height:24px"></div>
<div class="fldw" style="left:500px;top:365px;width:107px;height:24px"></div>
<div class="lbl" style="left:625px;top:370px;font-size:12px">Qty</div>
<div class="fldw" style="left:647px;top:365px;width:40px;height:24px"><div class="t" style="left:2px;top:6px;font-size:12.5px">1</div></div>
<div class="cb" style="left:707px;top:371px;width:12px;height:12px"></div>
<div class="lbl" style="left:724px;top:372px">Update existing lines</div>
<div class="a" style="left:11px;top:395px;width:1165px;height:259px;border:1px solid #B0B0B0;background:#fff"></div>
<div class="a" style="left:12px;top:396px;width:1163px;height:257px;border:1px solid #7890A8;border-right-color:#D8D8D8;border-bottom-color:#D8D8D8;background:#fff"></div>
<div class="a" style="left:13px;top:397px;width:1161px;height:21px;background:#FF6A30;overflow:hidden">
<div class="a" style="left:0px;top:1px;width:14px;height:19px;background:#C44C2C;border:1px solid #8A3A22;box-shadow:inset 1px 1px 0 #FF7040;color:#FFF4EC;font-size:12.3px;line-height:17px;padding-top:2px;text-align:center;white-space:nowrap;overflow:hidden;">T</div>
<div class="a" style="left:14px;top:1px;width:15px;height:19px;background:#C44C2C;border:1px solid #8A3A22;box-shadow:inset 1px 1px 0 #FF7040;color:#FFF4EC;font-size:12.3px;line-height:17px;padding-top:2px;text-align:center;white-space:nowrap;overflow:hidden;">C</div>
<div class="a" style="left:29px;top:1px;width:15px;height:19px;background:#C44C2C;border:1px solid #8A3A22;box-shadow:inset 1px 1px 0 #FF7040;color:#FFF4EC;font-size:12.3px;line-height:17px;padding-top:2px;text-align:center;white-space:nowrap;overflow:hidden;">X</div>
<div class="a" style="left:44px;top:1px;width:15px;height:19px;background:#C44C2C;border:1px solid #8A3A22;box-shadow:inset 1px 1px 0 #FF7040;color:#FFF4EC;font-size:12.3px;line-height:17px;padding-top:2px;text-align:center;white-space:nowrap;overflow:hidden;">M</div>
<div class="a" style="left:59px;top:1px;width:15px;height:19px;background:#C44C2C;border:1px solid #8A3A22;box-shadow:inset 1px 1px 0 #FF7040;color:#FFF4EC;font-size:12.3px;line-height:17px;padding-top:2px;text-align:center;white-space:nowrap;overflow:hidden;">S</div>
<div class="a" style="left:74px;top:1px;width:20px;height:19px;background:#C44C2C;border:1px solid #8A3A22;box-shadow:inset 1px 1px 0 #FF7040;color:#FFF4EC;font-size:12.3px;line-height:17px;padding-top:2px;text-align:center;white-space:nowrap;overflow:hidden;">I.C</div>
<div class="a" style="left:94px;top:1px;width:20px;height:19px;background:#C44C2C;border:1px solid #8A3A22;box-shadow:inset 1px 1px 0 #FF7040;color:#FFF4EC;font-size:12.3px;line-height:17px;padding-top:2px;text-align:center;white-space:nowrap;overflow:hidden;">I....</div>
<div class="a" style="left:114px;top:1px;width:20px;height:19px;background:#C44C2C;border:1px solid #8A3A22;box-shadow:inset 1px 1px 0 #FF7040;color:#FFF4EC;font-size:12.3px;line-height:17px;padding-top:2px;text-align:center;white-space:nowrap;overflow:hidden;">I.I</div>
<div class="a" style="left:134px;top:1px;width:75px;height:19px;background:#C44C2C;border:1px solid #8A3A22;box-shadow:inset 1px 1px 0 #FF7040;color:#FFF4EC;font-size:12.3px;line-height:17px;padding-top:2px;text-align:center;white-space:nowrap;overflow:hidden;">Status</div>
<div class="a" style="left:209px;top:1px;width:20px;height:19px;background:#C44C2C;border:1px solid #8A3A22;box-shadow:inset 1px 1px 0 #FF7040;color:#FFF4EC;font-size:12.3px;line-height:17px;padding-top:2px;text-align:center;white-space:nowrap;overflow:hidden;">L</div>
<div class="a" style="left:229px;top:1px;width:45px;height:19px;background:#C44C2C;border:1px solid #8A3A22;box-shadow:inset 1px 1px 0 #FF7040;color:#FFF4EC;font-size:12.3px;line-height:17px;padding-top:2px;text-align:center;white-space:nowrap;overflow:hidden;">Action</div>
<div class="a" style="left:274px;top:1px;width:133px;height:19px;background:#C44C2C;border:1px solid #8A3A22;box-shadow:inset 1px 1px 0 #FF7040;color:#FFF4EC;font-size:12.3px;line-height:17px;padding-top:2px;text-align:center;white-space:nowrap;overflow:hidden;text-align:left;padding-left:22px">Product I</div>
<div class="a" style="left:407px;top:1px;width:121px;height:19px;background:#C44C2C;border:1px solid #8A3A22;box-shadow:inset 1px 1px 0 #FF7040;color:#FFF4EC;font-size:12.3px;line-height:17px;padding-top:2px;text-align:center;white-space:nowrap;overflow:hidden;text-align:right;padding-right:1px">on</div>
<div class="a" style="left:528px;top:1px;width:30px;height:19px;background:#C44C2C;border:1px solid #8A3A22;box-shadow:inset 1px 1px 0 #FF7040;color:#FFF4EC;font-size:12.3px;line-height:17px;padding-top:2px;text-align:center;white-space:nowrap;overflow:hidden;">Qty</div>
<div class="a" style="left:558px;top:1px;width:100px;height:19px;background:#C44C2C;border:1px solid #8A3A22;box-shadow:inset 1px 1px 0 #FF7040;color:#FFF4EC;font-size:12.3px;line-height:17px;padding-top:2px;text-align:center;white-space:nowrap;overflow:hidden;">Shipping Site</div>
<div class="a" style="left:658px;top:1px;width:100px;height:19px;background:#C44C2C;border:1px solid #8A3A22;box-shadow:inset 1px 1px 0 #FF7040;color:#FFF4EC;font-size:12.3px;line-height:17px;padding-top:2px;text-align:center;white-space:nowrap;overflow:hidden;">Returning Site</div>
<div class="a" style="left:758px;top:1px;width:40px;height:19px;background:#C44C2C;border:1px solid #8A3A22;box-shadow:inset 1px 1px 0 #FF7040;color:#FFF4EC;font-size:12.3px;line-height:17px;padding-top:2px;text-align:center;white-space:nowrap;overflow:hidden;">Unit</div>
<div class="a" style="left:798px;top:1px;width:90px;height:19px;background:#C44C2C;border:1px solid #8A3A22;box-shadow:inset 1px 1px 0 #FF7040;color:#FFF4EC;font-size:12.3px;line-height:17px;padding-top:2px;text-align:center;white-space:nowrap;overflow:hidden;">Day/Each Price</div>
<div class="a" style="left:888px;top:1px;width:70px;height:19px;background:#C44C2C;border:1px solid #8A3A22;box-shadow:inset 1px 1px 0 #FF7040;color:#FFF4EC;font-size:12.3px;line-height:17px;padding-top:2px;text-align:center;white-space:nowrap;overflow:hidden;">Week Price</div>
<div class="a" style="left:958px;top:1px;width:70px;height:19px;background:#C44C2C;border:1px solid #8A3A22;box-shadow:inset 1px 1px 0 #FF7040;color:#FFF4EC;font-size:12.3px;line-height:17px;padding-top:2px;text-align:center;white-space:nowrap;overflow:hidden;">Month Price</div>
<div class="a" style="left:1028px;top:1px;width:55px;height:19px;background:#C44C2C;border:1px solid #8A3A22;box-shadow:inset 1px 1px 0 #FF7040;color:#FFF4EC;font-size:12.3px;line-height:17px;padding-top:2px;text-align:center;white-space:nowrap;overflow:hidden;">Discount</div>
<div class="a" style="left:1083px;top:1px;width:60px;height:19px;background:#C44C2C;border:1px solid #8A3A22;box-shadow:inset 1px 1px 0 #FF7040;color:#FFF4EC;font-size:12.3px;line-height:17px;padding-top:2px;text-align:center;white-space:nowrap;overflow:hidden;">Net Each</div>
<div class="a" style="left:1143px;top:1px;width:44px;height:19px;background:#C44C2C;border:1px solid #8A3A22;box-shadow:inset 1px 1px 0 #FF7040;color:#FFF4EC;font-size:12.3px;line-height:17px;padding-top:2px;text-align:center;white-space:nowrap;overflow:hidden;text-align:left;padding-left:3px">&nbsp;N</div>
</div>
<div class="a" style="left:13px;top:418px;width:1161px;height:19px;background:#fff;overflow:hidden">
<div class="a" style="left:0px;top:0;width:15px;height:19px;border-right:1px solid #C0702E;border-bottom:1px solid #C0702E"></div>
<div class="a" style="left:14px;top:0;width:16px;height:19px;border-right:1px solid #C0702E;border-bottom:1px solid #C0702E"></div>
<div class="a" style="left:29px;top:0;width:16px;height:19px;border-right:1px solid #C0702E;border-bottom:1px solid #C0702E"></div>
<div class="a" style="left:44px;top:0;width:16px;height:19px;border-right:1px solid #C0702E;border-bottom:1px solid #C0702E"></div>
<div class="a" style="left:59px;top:0;width:16px;height:19px;border-right:1px solid #C0702E;border-bottom:1px solid #C0702E"></div>
<div class="a" style="left:74px;top:0;width:21px;height:19px;border-right:1px solid #C0702E;border-bottom:1px solid #C0702E"></div>
<div class="a" style="left:94px;top:0;width:21px;height:19px;border-right:1px solid #C0702E;border-bottom:1px solid #C0702E"></div>
<div class="a" style="left:114px;top:0;width:21px;height:19px;border-right:1px solid #C0702E;border-bottom:1px solid #C0702E"></div>
<div class="a" style="left:134px;top:0;width:76px;height:19px;border-right:1px solid #C0702E;border-bottom:1px solid #C0702E"></div>
<div class="a" style="left:209px;top:0;width:21px;height:19px;border-right:1px solid #C0702E;border-bottom:1px solid #C0702E"></div>
<div class="a" style="left:229px;top:0;width:46px;height:19px;border-right:1px solid #C0702E;border-bottom:1px solid #C0702E"></div>
<div class="a" style="left:274px;top:0;width:134px;height:19px;border-right:1px solid #C0702E;border-bottom:1px solid #C0702E"></div>
<div class="a" style="left:407px;top:0;width:122px;height:19px;border-right:1px solid #C0702E;border-bottom:1px solid #C0702E"></div>
<div class="a" style="left:528px;top:0;width:31px;height:19px;border-right:1px solid #C0702E;border-bottom:1px solid #C0702E"></div>
<div class="a" style="left:558px;top:0;width:101px;height:19px;border-right:1px solid #C0702E;border-bottom:1px solid #C0702E"></div>
<div class="a" style="left:658px;top:0;width:101px;height:19px;border-right:1px solid #C0702E;border-bottom:1px solid #C0702E"></div>
<div class="a" style="left:758px;top:0;width:41px;height:19px;border-right:1px solid #C0702E;border-bottom:1px solid #C0702E"></div>
<div class="a" style="left:798px;top:0;width:91px;height:19px;border-right:1px solid #C0702E;border-bottom:1px solid #C0702E"></div>
<div class="a" style="left:888px;top:0;width:71px;height:19px;border-right:1px solid #C0702E;border-bottom:1px solid #C0702E"></div>
<div class="a" style="left:958px;top:0;width:71px;height:19px;border-right:1px solid #C0702E;border-bottom:1px solid #C0702E"></div>
<div class="a" style="left:1028px;top:0;width:56px;height:19px;border-right:1px solid #C0702E;border-bottom:1px solid #C0702E"></div>
<div class="a" style="left:1083px;top:0;width:61px;height:19px;border-right:1px solid #C0702E;border-bottom:1px solid #C0702E"></div>
<div class="a" style="left:1143px;top:0;width:45px;height:19px;border-right:1px solid #C0702E;border-bottom:1px solid #C0702E"></div>
</div>
<div class="cb" style="left:14px;top:421px;width:12px;height:12px"><svg class="a" style="left:0px;top:0px" width="11" height="11" viewBox="0 0 11 11"><path d="M2 5.2L4.2 4.6L5 6.6L9 2L9.8 2.8L4.6 9.2L3.6 9.2z" fill="#1A1A1A"/></svg></div>
<div class="cb" style="left:28px;top:421px;width:12px;height:12px"><svg class="a" style="left:0px;top:0px" width="11" height="11" viewBox="0 0 11 11"><path d="M2 5.2L4.2 4.6L5 6.6L9 2L9.8 2.8L4.6 9.2L3.6 9.2z" fill="#1A1A1A"/></svg></div>
<div class="cb" style="left:43px;top:421px;width:12px;height:12px"></div>
<div class="cb" style="left:58px;top:421px;width:12px;height:12px"></div>
<div class="cb" style="left:73px;top:421px;width:12px;height:12px"></div>
<div class="cb" style="left:91px;top:421px;width:12px;height:12px"></div>
<div class="cb" style="left:111px;top:421px;width:12px;height:12px"></div>
<div class="cb" style="left:131px;top:421px;width:12px;height:12px"></div>
<div class="cb" style="left:226px;top:421px;width:12px;height:12px"></div>
<div class="t" style="left:149px;top:422px;font-size:12.3px;color:#000">Reserved</div>
<div class="t" style="left:245px;top:422px;font-size:12.3px;color:#000">Rent</div>
<div class="t" style="left:289px;top:422px;font-size:12.3px;color:#000">LGQ6</div>
<div class="t" style="right:618px;top:422px;font-size:12.3px;color:#000">3</div>
<div class="t" style="left:573px;top:422px;font-size:12.3px;color:#000">COLOGNE</div>
<div class="t" style="left:673px;top:422px;font-size:12.3px;color:#000">PARIS</div>
<div class="t" style="left:773px;top:422px;font-size:12.3px;color:#000">Day</div>
<div class="t" style="right:288px;top:422px;font-size:12.3px;color:#000">0.00</div>
<div class="t" style="right:218px;top:422px;font-size:12.3px;color:#000">0.00</div>
<div class="t" style="right:148px;top:422px;font-size:12.3px;color:#000">0.00</div>
<div class="t" style="right:93px;top:422px;font-size:12.3px;color:#000">0.00</div>
<div class="t" style="right:33px;top:422px;font-size:12.3px;color:#000">0.00</div>
<div class="a" style="left:13px;top:437px;width:1161px;height:19px;background:#FF9A48;overflow:hidden">
<div class="a" style="left:0px;top:0;width:15px;height:19px;border-right:1px solid #C0702E;border-bottom:1px solid #C0702E"></div>
<div class="a" style="left:14px;top:0;width:16px;height:19px;border-right:1px solid #C0702E;border-bottom:1px solid #C0702E"></div>
<div class="a" style="left:29px;top:0;width:16px;height:19px;border-right:1px solid #C0702E;border-bottom:1px solid #C0702E"></div>
<div class="a" style="left:44px;top:0;width:16px;height:19px;border-right:1px solid #C0702E;border-bottom:1px solid #C0702E"></div>
<div class="a" style="left:59px;top:0;width:16px;height:19px;border-right:1px solid #C0702E;border-bottom:1px solid #C0702E"></div>
<div class="a" style="left:74px;top:0;width:21px;height:19px;border-right:1px solid #C0702E;border-bottom:1px solid #C0702E"></div>
<div class="a" style="left:94px;top:0;width:21px;height:19px;border-right:1px solid #C0702E;border-bottom:1px solid #C0702E"></div>
<div class="a" style="left:114px;top:0;width:21px;height:19px;border-right:1px solid #C0702E;border-bottom:1px solid #C0702E"></div>
<div class="a" style="left:134px;top:0;width:76px;height:19px;border-right:1px solid #C0702E;border-bottom:1px solid #C0702E"></div>
<div class="a" style="left:209px;top:0;width:21px;height:19px;border-right:1px solid #C0702E;border-bottom:1px solid #C0702E"></div>
<div class="a" style="left:229px;top:0;width:46px;height:19px;border-right:1px solid #C0702E;border-bottom:1px solid #C0702E"></div>
<div class="a" style="left:274px;top:0;width:134px;height:19px;border-right:1px solid #C0702E;border-bottom:1px solid #C0702E"></div>
<div class="a" style="left:407px;top:0;width:122px;height:19px;border-right:1px solid #C0702E;border-bottom:1px solid #C0702E"></div>
<div class="a" style="left:528px;top:0;width:31px;height:19px;border-right:1px solid #C0702E;border-bottom:1px solid #C0702E"></div>
<div class="a" style="left:558px;top:0;width:101px;height:19px;border-right:1px solid #C0702E;border-bottom:1px solid #C0702E"></div>
<div class="a" style="left:658px;top:0;width:101px;height:19px;border-right:1px solid #C0702E;border-bottom:1px solid #C0702E"></div>
<div class="a" style="left:758px;top:0;width:41px;height:19px;border-right:1px solid #C0702E;border-bottom:1px solid #C0702E"></div>
<div class="a" style="left:798px;top:0;width:91px;height:19px;border-right:1px solid #C0702E;border-bottom:1px solid #C0702E"></div>
<div class="a" style="left:888px;top:0;width:71px;height:19px;border-right:1px solid #C0702E;border-bottom:1px solid #C0702E"></div>
<div class="a" style="left:958px;top:0;width:71px;height:19px;border-right:1px solid #C0702E;border-bottom:1px solid #C0702E"></div>
<div class="a" style="left:1028px;top:0;width:56px;height:19px;border-right:1px solid #C0702E;border-bottom:1px solid #C0702E"></div>
<div class="a" style="left:1083px;top:0;width:61px;height:19px;border-right:1px solid #C0702E;border-bottom:1px solid #C0702E"></div>
<div class="a" style="left:1143px;top:0;width:45px;height:19px;border-right:1px solid #C0702E;border-bottom:1px solid #C0702E"></div>
</div>
<div class="cb" style="left:14px;top:440px;width:12px;height:12px"><svg class="a" style="left:0px;top:0px" width="11" height="11" viewBox="0 0 11 11"><path d="M2 5.2L4.2 4.6L5 6.6L9 2L9.8 2.8L4.6 9.2L3.6 9.2z" fill="#1A1A1A"/></svg></div>
<div class="cb" style="left:28px;top:440px;width:12px;height:12px"><svg class="a" style="left:0px;top:0px" width="11" height="11" viewBox="0 0 11 11"><path d="M2 5.2L4.2 4.6L5 6.6L9 2L9.8 2.8L4.6 9.2L3.6 9.2z" fill="#1A1A1A"/></svg></div>
<div class="cb" style="left:43px;top:440px;width:12px;height:12px"></div>
<div class="cb" style="left:58px;top:440px;width:12px;height:12px"></div>
<div class="cb" style="left:73px;top:440px;width:12px;height:12px"></div>
<div class="cb" style="left:91px;top:440px;width:12px;height:12px"></div>
<div class="cb" style="left:111px;top:440px;width:12px;height:12px"></div>
<div class="cb" style="left:131px;top:440px;width:12px;height:12px"></div>
<div class="cb" style="left:226px;top:440px;width:12px;height:12px"></div>
<div class="t" style="left:149px;top:441px;font-size:12.3px;color:#000">Reserved</div>
<div class="t" style="left:245px;top:441px;font-size:12.3px;color:#000">Rent</div>
<div class="t" style="left:289px;top:441px;font-size:12.3px;color:#000">LGQ6</div>
<div class="t" style="right:618px;top:441px;font-size:12.3px;color:#000">4</div>
<div class="t" style="left:573px;top:441px;font-size:12.3px;color:#000">BUDAPEST</div>
<div class="t" style="left:673px;top:441px;font-size:12.3px;color:#000">PARIS</div>
<div class="t" style="left:773px;top:441px;font-size:12.3px;color:#000">Day</div>
<div class="t" style="right:288px;top:441px;font-size:12.3px;color:#000">0.00</div>
<div class="t" style="right:218px;top:441px;font-size:12.3px;color:#000">0.00</div>
<div class="t" style="right:148px;top:441px;font-size:12.3px;color:#000">0.00</div>
<div class="t" style="right:93px;top:441px;font-size:12.3px;color:#000">0.00</div>
<div class="t" style="right:33px;top:441px;font-size:12.3px;color:#000">0.00</div>
<div class="a" style="left:13px;top:456px;width:1161px;height:19px;background:#FF9A48;overflow:hidden">
<div class="a" style="left:0px;top:0;width:15px;height:19px;border-right:1px solid #C0702E;border-bottom:1px solid #C0702E"></div>
<div class="a" style="left:14px;top:0;width:16px;height:19px;border-right:1px solid #C0702E;border-bottom:1px solid #C0702E"></div>
<div class="a" style="left:29px;top:0;width:16px;height:19px;border-right:1px solid #C0702E;border-bottom:1px solid #C0702E"></div>
<div class="a" style="left:44px;top:0;width:16px;height:19px;border-right:1px solid #C0702E;border-bottom:1px solid #C0702E"></div>
<div class="a" style="left:59px;top:0;width:16px;height:19px;border-right:1px solid #C0702E;border-bottom:1px solid #C0702E"></div>
<div class="a" style="left:74px;top:0;width:21px;height:19px;border-right:1px solid #C0702E;border-bottom:1px solid #C0702E"></div>
<div class="a" style="left:94px;top:0;width:21px;height:19px;border-right:1px solid #C0702E;border-bottom:1px solid #C0702E"></div>
<div class="a" style="left:114px;top:0;width:21px;height:19px;border-right:1px solid #C0702E;border-bottom:1px solid #C0702E"></div>
<div class="a" style="left:134px;top:0;width:76px;height:19px;border-right:1px solid #C0702E;border-bottom:1px solid #C0702E"></div>
<div class="a" style="left:209px;top:0;width:21px;height:19px;border-right:1px solid #C0702E;border-bottom:1px solid #C0702E"></div>
<div class="a" style="left:229px;top:0;width:46px;height:19px;border-right:1px solid #C0702E;border-bottom:1px solid #C0702E"></div>
<div class="a" style="left:274px;top:0;width:134px;height:19px;border-right:1px solid #C0702E;border-bottom:1px solid #C0702E"></div>
<div class="a" style="left:407px;top:0;width:122px;height:19px;border-right:1px solid #C0702E;border-bottom:1px solid #C0702E"></div>
<div class="a" style="left:528px;top:0;width:31px;height:19px;border-right:1px solid #C0702E;border-bottom:1px solid #C0702E"></div>
<div class="a" style="left:558px;top:0;width:101px;height:19px;border-right:1px solid #C0702E;border-bottom:1px solid #C0702E"></div>
<div class="a" style="left:658px;top:0;width:101px;height:19px;border-right:1px solid #C0702E;border-bottom:1px solid #C0702E"></div>
<div class="a" style="left:758px;top:0;width:41px;height:19px;border-right:1px solid #C0702E;border-bottom:1px solid #C0702E"></div>
<div class="a" style="left:798px;top:0;width:91px;height:19px;border-right:1px solid #C0702E;border-bottom:1px solid #C0702E"></div>
<div class="a" style="left:888px;top:0;width:71px;height:19px;border-right:1px solid #C0702E;border-bottom:1px solid #C0702E"></div>
<div class="a" style="left:958px;top:0;width:71px;height:19px;border-right:1px solid #C0702E;border-bottom:1px solid #C0702E"></div>
<div class="a" style="left:1028px;top:0;width:56px;height:19px;border-right:1px solid #C0702E;border-bottom:1px solid #C0702E"></div>
<div class="a" style="left:1083px;top:0;width:61px;height:19px;border-right:1px solid #C0702E;border-bottom:1px solid #C0702E"></div>
<div class="a" style="left:1143px;top:0;width:45px;height:19px;border-right:1px solid #C0702E;border-bottom:1px solid #C0702E"></div>
</div>
<div class="cb" style="left:14px;top:459px;width:12px;height:12px"><svg class="a" style="left:0px;top:0px" width="11" height="11" viewBox="0 0 11 11"><path d="M2 5.2L4.2 4.6L5 6.6L9 2L9.8 2.8L4.6 9.2L3.6 9.2z" fill="#1A1A1A"/></svg></div>
<div class="cb" style="left:28px;top:459px;width:12px;height:12px"><svg class="a" style="left:0px;top:0px" width="11" height="11" viewBox="0 0 11 11"><path d="M2 5.2L4.2 4.6L5 6.6L9 2L9.8 2.8L4.6 9.2L3.6 9.2z" fill="#1A1A1A"/></svg></div>
<div class="cb" style="left:43px;top:459px;width:12px;height:12px"></div>
<div class="cb" style="left:58px;top:459px;width:12px;height:12px"></div>
<div class="cb" style="left:73px;top:459px;width:12px;height:12px"></div>
<div class="cb" style="left:91px;top:459px;width:12px;height:12px"></div>
<div class="cb" style="left:111px;top:459px;width:12px;height:12px"></div>
<div class="cb" style="left:131px;top:459px;width:12px;height:12px"></div>
<div class="cb" style="left:226px;top:459px;width:12px;height:12px"></div>
<div class="t" style="left:149px;top:460px;font-size:12.3px;color:#000">Reserved</div>
<div class="t" style="left:245px;top:460px;font-size:12.3px;color:#000">Rent</div>
<div class="t" style="left:289px;top:460px;font-size:12.3px;color:#000">LGQ6</div>
<div class="t" style="right:618px;top:460px;font-size:12.3px;color:#000">5</div>
<div class="t" style="left:573px;top:460px;font-size:12.3px;color:#000">BERLIN</div>
<div class="t" style="left:673px;top:460px;font-size:12.3px;color:#000">PARIS</div>
<div class="t" style="left:773px;top:460px;font-size:12.3px;color:#000">Day</div>
<div class="t" style="right:288px;top:460px;font-size:12.3px;color:#000">0.00</div>
<div class="t" style="right:218px;top:460px;font-size:12.3px;color:#000">0.00</div>
<div class="t" style="right:148px;top:460px;font-size:12.3px;color:#000">0.00</div>
<div class="t" style="right:93px;top:460px;font-size:12.3px;color:#000">0.00</div>
<div class="t" style="right:33px;top:460px;font-size:12.3px;color:#000">0.00</div>
<div class="a" style="left:540px;top:437px;width:233px;height:40px;border:2px solid #B81C1C"></div>
<div class="a" style="left:13px;top:635px;width:1161px;height:17px;background:#EEEEEE;border-top:1px solid #7890A8;border-bottom:1px solid #7890A8"></div>
<div class="a" style="left:14px;top:636px;width:14px;height:15px;background:#EEEEEE;border-left:1px solid #fff;border-top:1px solid #fff"></div>
<svg class="a" style="left:18px;top:640px" width="5" height="8" viewBox="0 0 5 8"><path d="M4.5 0v8L0 4z" fill="#222"/></svg>
<div class="a" style="left:28px;top:635px;width:581px;height:16px;background:linear-gradient(to right,rgba(255,255,255,0.35),rgba(255,255,255,0) 40px),linear-gradient(#EEBC96,#E59E6C);border:1px solid #F8BC10"></div>
<div class="a" style="left:316px;top:639px;width:5px;height:8px;border-left:1px solid #A88870;border-right:1px solid #A88870"><div class="a" style="left:1px;top:0;width:1px;height:8px;background:#A88870"></div></div>
<div class="a" style="left:1157px;top:636px;width:15px;height:15px;background:#EEEEEE;border-left:1px solid #B8B8B8"></div>
<svg class="a" style="left:1162px;top:640px" width="6" height="8" viewBox="0 0 6 8"><path d="M0 0v8L5 4z" fill="#111"/></svg>
<div class="t bold" style="left:70px;top:667px;font-size:13.6px;letter-spacing:0.35px;color:#1A1A1A">Items</div>
<div class="t bold" style="left:235px;top:667px;font-size:13.6px;letter-spacing:0.35px;color:#1A1A1A">Labor</div>
<div class="t bold" style="left:446px;top:667px;font-size:13.6px;letter-spacing:0.35px;color:#1A1A1A">Sub Total</div>
<div class="t bold" style="left:636px;top:667px;font-size:13.6px;letter-spacing:0.35px;color:#1A1A1A">Tax</div>
<div class="fld" style="left:120px;top:661px;width:100px;height:24px;border-color:#8A8A8A"></div>
<div class="fld" style="left:287px;top:661px;width:100px;height:24px;border-color:#8A8A8A"></div>
<div class="fld" style="left:525px;top:661px;width:100px;height:24px;border-color:#8A8A8A"></div>
<div class="fld" style="left:670px;top:661px;width:100px;height:24px;border-color:#8A8A8A"></div>
<div class="a" style="left:813px;top:661px;width:89px;height:24px;border:1px solid #C8C8C8;background:#fff"><div class="t bold" style="left:28px;top:5px;font-size:13.6px;letter-spacing:0.35px;color:#1A1A1A">Total</div></div>
<div class="fld" style="left:906px;top:661px;width:100px;height:24px;border-color:#8A8A8A"><div class="t bold" style="left:1px;top:4px;font-size:13.6px;color:#111">0.00</div></div>
<div class="a" style="left:9px;top:695px;width:1170px;height:24px;border:1px solid #C8C8C8;border-top:2px solid #888;background:#fff"></div>
<div class="a" style="left:359px;top:0;width:165px;height:578px;background:#EEEEEE;border:1px solid #6A86C4;box-shadow:inset 1px 1px 0 #fff"></div>
<div class="a" style="left:360px;top:23px;width:163px;height:1px;background:#7A8EC0"></div>
<div class="a" style="left:360px;top:24px;width:163px;height:1px;background:#fff"></div>
<div class="mi" style="top:7px">Reset Tab Order</div>
<div class="mi" style="top:30px">Add</div>
<div class="mi" style="top:49px">Delete</div>
<div class="mi" style="top:68px">Edit</div>
<div class="mi" style="top:87px">Find</div>
<div class="mi" style="top:106px">Assign</div>
<div class="mi" style="top:125px">Font</div>
<div class="mi" style="top:144px">Expand / Collapse</div>
<div class="mi" style="top:163px">Reserve</div>
<div class="mi" style="top:182px">Not Available</div>
<div class="mi" style="top:201px">Hold</div>
<div class="mi" style="top:220px">Accessories</div>
<div class="mi" style="top:239px">Comments</div>
<div class="mi" style="top:258px">Split</div>
<div class="mi" style="top:277px">Create Misc PO</div>
<div class="mi" style="top:296px">Open PO</div>
<div class="mi" style="top:315px">View Image</div>
<div class="mi" style="top:334px">Update Line Details</div>
<div class="mi" style="top:353px">Force Reserve</div>
<div class="mi" style="top:372px">Mark As Deleted</div>
<div class="mi" style="top:391px">Package Pricing</div>
<div class="mi" style="top:410px">Detail Pricing</div>
<div class="mi" style="top:429px">View / Select Lot Number</div>
<div class="mi" style="top:448px">View Meters</div>
<div class="mi dis" style="top:467px">Fill &amp; Dispatch</div>
<div class="mi dis" style="top:486px">Shortage Details Duration</div>
<div class="mi" style="top:505px">Equipment Usage View</div>
<div class="mi" style="top:524px">Edit Asset</div>
<div class="mi dis" style="top:543px">Resolve</div>
<div class="a" style="left:358px;top:559px;width:166px;height:19px;background:#FFAE6C;border:2px solid #C01818"></div>
<div class="mi" style="top:562px;color:#111">Generate Ops Order</div>
<div class="a" style="left:565px;top:482px;width:412px;height:135px;background:#E9906A;border:1px solid #C47458"></div>
<div class="a" style="left:575px;top:489px;width:16px;height:16px;background:#C9C9C9;border-top:2px solid #3A78C8;border-bottom:2px solid #3A78C8"><div class="t" style="left:1px;top:1px;font-family:'Liberation Serif';font-size:11px;color:#111">R<sub style="font-size:8px">2</sub></div></div>
<div class="t" style="left:762px;top:490px;font-size:15px;color:#1F2430;transform:scaleX(0.96);transform-origin:0 0">R2</div>
<div class="a" style="left:939px;top:483px;width:31px;height:20px;background:#C75050"></div>
<svg class="a" style="left:949px;top:488px" width="11" height="10" viewBox="0 0 11 10"><path d="M1 0.5l9 9M10 0.5l-9 9" stroke="#fff" stroke-width="1.6"/></svg>
<div class="a" style="left:572px;top:513px;width:398px;height:96px;background:#fff"></div>
<div class="a" style="left:589px;top:534px;width:27px;height:27px;background:#9CCB98;border:1px solid #3E6A48;box-shadow:2px 2px 2px rgba(0,0,0,0.25)"><svg class="a" style="left:0;top:0" width="25" height="25" viewBox="0 0 25 25"><path d="M8.2 9.2Q8 4.6 12.8 4.6Q17.6 4.6 17.4 8.4Q17.3 10.6 15 12Q13.6 13 13.6 14.6H11.2Q11 12 13 10.6Q14.6 9.4 14.4 8.4Q14.3 7 12.8 7Q11.2 7 11.1 9.2z" fill="#064A06" stroke="#C8F4C0" stroke-width="0.9" paint-order="stroke"/><rect x="10.8" y="15.6" width="3.4" height="3.4" fill="#064A06" stroke="#C8F4C0" stroke-width="0.9" paint-order="stroke"/></svg></div>
<div class="t" style="left:632px;top:544px;font-size:12.2px;color:#222">R2_01580:Do you want to generate Operation order?</div>
<div class="a" style="left:696px;top:583px;width:79px;height:24px;border:1px solid #ADADAD;background:#fff"></div>
<div class="a" style="left:725px;top:587px;width:23px;height:17px;border:1px solid #C03020"></div>
<div class="t" style="left:726px;top:590px;font-size:12.5px;color:#222">Yes</div>
<div class="a" style="left:781px;top:583px;width:79px;height:24px;border:1px solid #ADADAD;background:#fff"></div>
<div class="t" style="left:812px;top:590px;font-size:12.5px;color:#222">No</div>
<div class="a" style="left:510px;top:567px;width:81px;height:2px;background:#C01818"></div>
<svg class="a" style="left:582px;top:563px" width="12" height="11" viewBox="0 0 12 11"><path d="M1 1l9.5 4.5-9.5 4.5" fill="none" stroke="#C01818" stroke-width="1.8"/></svg>
</body></html>
